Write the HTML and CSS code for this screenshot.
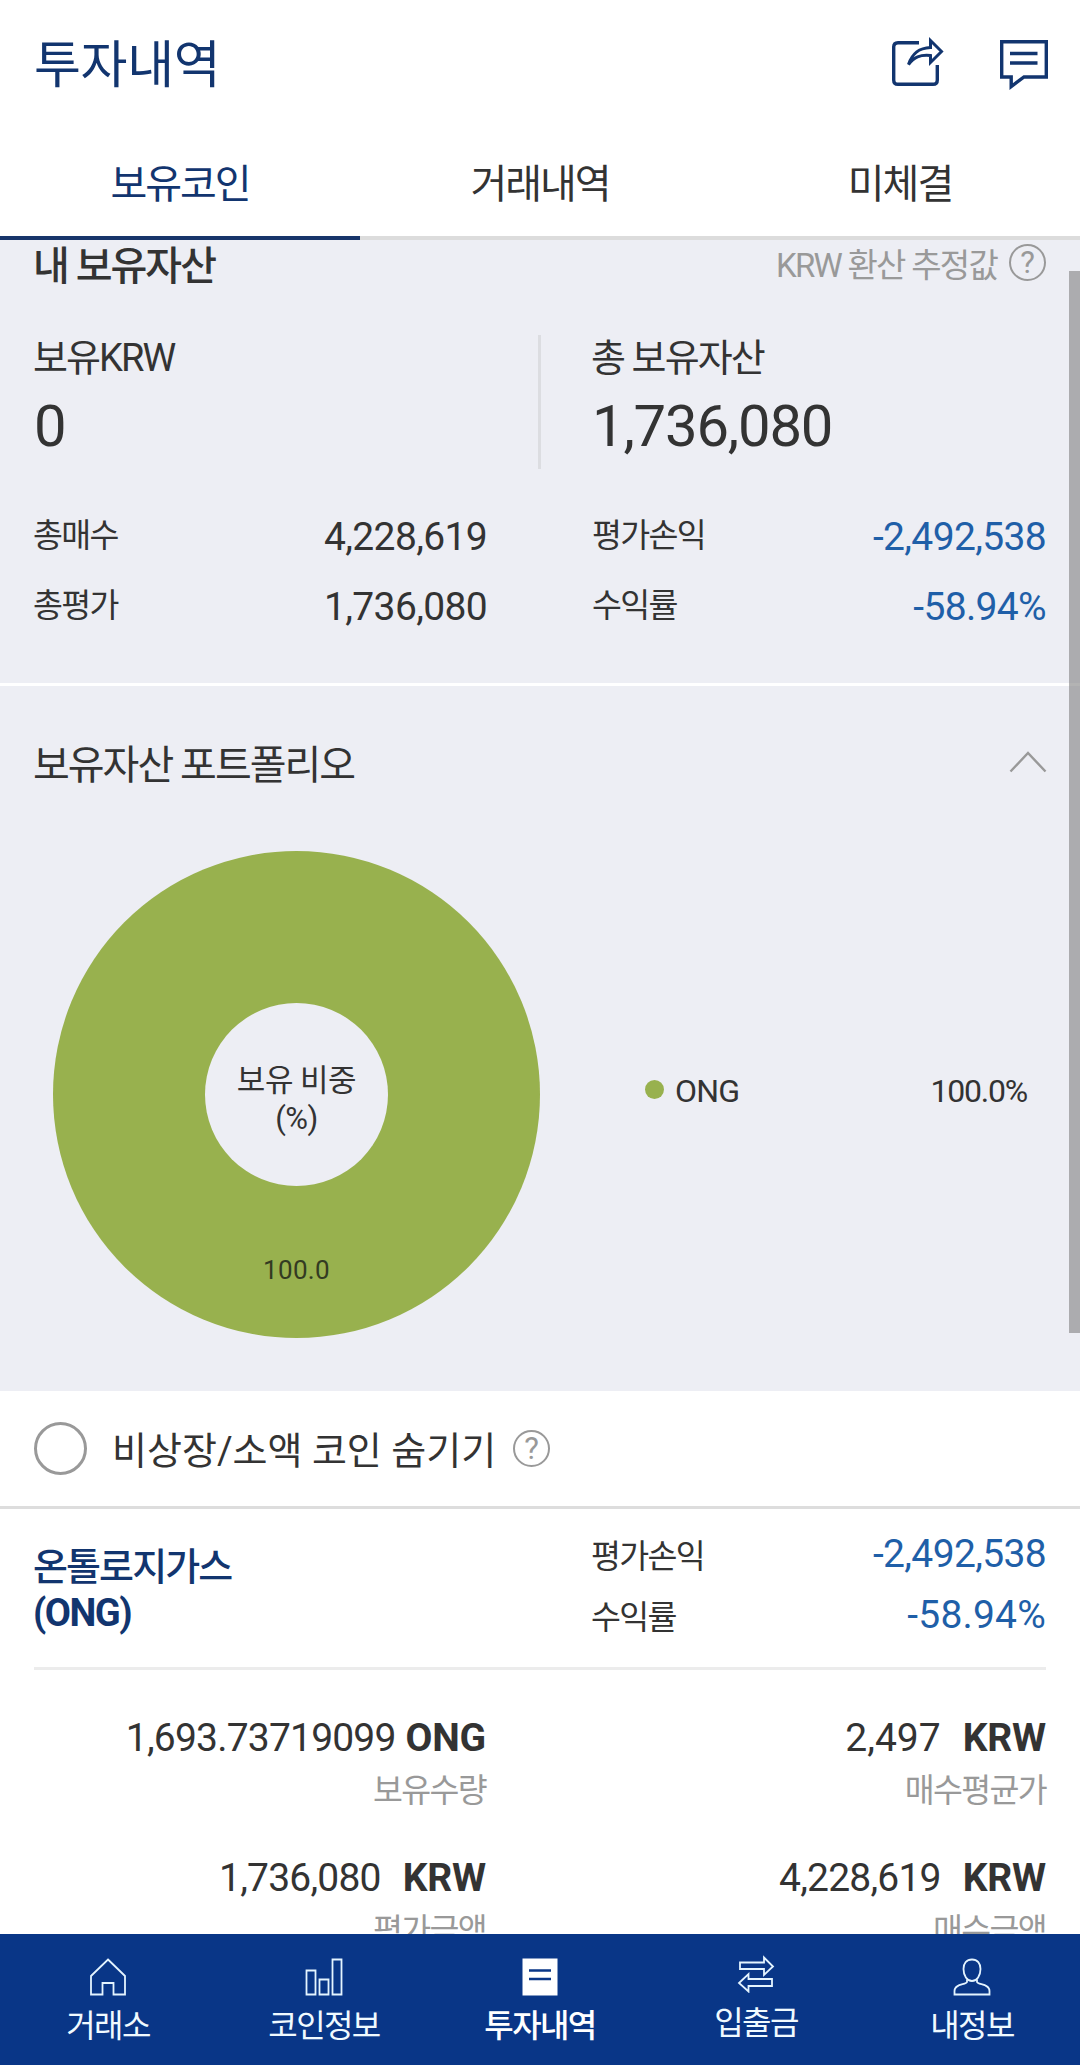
FILE: index.html
```html
<!DOCTYPE html>
<html lang="ko">
<head>
  <meta charset="UTF-8">
  <meta name="viewport" content="width=device-width, initial-scale=1.0">
  <title>투자내역</title>
  <link rel="stylesheet" href="styles.css">
</head>
<body>
  <div class="app">
    <header class="header">
      <h1>투자내역</h1>
      <div class="header-icons">
        <svg width="54" height="56" viewBox="0 0 54 56" fill="none" stroke="#12356f" stroke-width="3.4">
          <path d="M29 7.700H8Q3.700 7.700 3.700 12V45Q3.700 49.300 8 49.300H43Q47.300 49.300 47.300 45V30"/>
          <path stroke-width="3" d="M18.500 29.500C22 19 28 13 40.500 12.500V5.500L51.500 16.500L40.500 27.500V20.500C30 19.500 24 22 18.500 29.500Z"/>
        </svg>
        <svg width="50" height="56" viewBox="0 0 50 56" fill="none" stroke="#12356f" stroke-width="3.4">
          <path d="M2.700 6.700H47.300V42H25L12.200 51.500V42H2.700Z"/>
          <path d="M11 18.500H38.500M11 28H38.500"/>
        </svg>
      </div>
    </header>

    <nav class="tabs">
      <a class="tab active" href="#">보유코인</a>
      <a class="tab" href="#">거래내역</a>
      <a class="tab" href="#">미체결</a>
    </nav>

    <main class="content">
      <section class="assets">
        <div class="assets-head">
          <h2>내 보유자산</h2>
          <div class="note">KRW 환산 추정값 <span class="help">?</span></div>
        </div>
        <div class="totals">
          <div class="total">
            <div class="total-label">보유KRW</div>
            <div class="total-value">0</div>
          </div>
          <div class="total total-right">
            <div class="total-label">총 보유자산</div>
            <div class="total-value">1,736,080</div>
          </div>
        </div>
        <dl class="stats">
          <div><dt>총매수</dt><dd>4,228,619</dd></div>
          <div><dt>평가손익</dt><dd class="down">-2,492,538</dd></div>
          <div><dt>총평가</dt><dd>1,736,080</dd></div>
          <div><dt>수익률</dt><dd class="down">-58.94%</dd></div>
        </dl>
      </section>

      <section class="portfolio">
        <div class="portfolio-head">
          <h2>보유자산 포트폴리오</h2>
          <svg width="38" height="22" viewBox="0 0 38 22" fill="none" stroke="#999" stroke-width="2.400">
            <path d="M1.500 20.500L19 2L36.500 20.500"/>
          </svg>
        </div>
        <div class="portfolio-body">
          <div class="donut">
            <div class="donut-hole">보유 비중<br>(%)</div>
            <span class="donut-value">100.0</span>
          </div>
          <div class="legend">
            <span class="dot"></span>
            <span>ONG</span>
            <span class="legend-value">100.0%</span>
          </div>
        </div>
      </section>

      <div class="filter">
        <span class="radio"></span>
        <span class="filter-text">비상장/소액 코인 숨기기</span>
        <span class="help">?</span>
      </div>

      <section class="coin">
        <div class="coin-head">
          <h3>온톨로지가스<br><b>(ONG)</b></h3>
          <dl class="coin-stats">
            <div><dt>평가손익</dt><dd class="down">-2,492,538</dd></div>
            <div><dt>수익률</dt><dd class="down rate">-58.94%</dd></div>
          </dl>
        </div>
        <div class="coin-grid">
          <div class="cell">
            <div class="amount">1,693.73719099<b>ONG</b></div>
            <div class="caption">보유수량</div>
          </div>
          <div class="cell">
            <div class="amount krw price">2,497<b>KRW</b></div>
            <div class="caption">매수평균가</div>
          </div>
          <div class="cell">
            <div class="amount krw">1,736,080<b>KRW</b></div>
            <div class="caption">평가금액</div>
          </div>
          <div class="cell">
            <div class="amount krw">4,228,619<b>KRW</b></div>
            <div class="caption">매수금액</div>
          </div>
        </div>
      </section>
      <div class="scrollbar"></div>
    </main>

    <nav class="bottom-nav">
      <a href="#">
        <svg width="38" height="38" viewBox="0 0 38 38" fill="none" stroke="#e4f4ff" stroke-width="1.800">
          <path d="M19 1.500L36 18V36.500H24.500V25H13.500V36.500H2V18Z"/>
        </svg>
        거래소
      </a>
      <a href="#">
        <svg width="38" height="38" viewBox="0 0 38 38" fill="none" stroke="#e4f4ff" stroke-width="1.800">
          <path d="M1.500 12.500H10.500V36.500H1.500ZM14.500 21.500H23.500V36.500H14.500ZM27.500 1.500H36.500V36.500H27.500Z"/>
        </svg>
        코인정보
      </a>
      <a class="active" href="#">
        <svg width="38" height="38" viewBox="0 0 38 38">
          <path fill="#fff" d="M1.500 .500H36.500V37.500H1.500Z"/>
          <path stroke="#093687" stroke-width="2.500" d="M8 12.500H30M8 21H30"/>
        </svg>
        투자내역
      </a>
      <a class="transfer" href="#">
        <svg width="38" height="38" viewBox="0 0 38 38" fill="none" stroke="#e4f4ff" stroke-width="1.800">
          <path d="M3 7.500H27V2.500L36 11.500L27 20V14H3Z"/>
          <path d="M35 24H11.500V19L2 28L11.500 36.500V31H35Z"/>
        </svg>
        입출금
      </a>
      <a href="#">
        <svg width="38" height="38" viewBox="0 0 38 38" fill="none" stroke="#e4f4ff" stroke-width="1.800">
          <path d="M14 21.500V24C13 27 1.500 25.500 1.500 33V36.500H36.500V33C36.500 25.500 25 27 24 24V21.500"/>
          <path d="M19 1.500C13.500 1.500 10.500 5.500 10.500 11C10.500 17.500 14 23 19 23S27.500 17.500 27.500 11C27.500 5.500 24.500 1.500 19 1.500Z"/>
        </svg>
        내정보
      </a>
    </nav>
  </div>
</body>
</html>
```
FILE: styles.css
```css
* {
  box-sizing: border-box;
}
body {
  margin: 0;
  font-family: Roboto, 'Noto Sans CJK KR', sans-serif;
  color: #333;
  background-color: #fff;
}
h1, h2, h3, dl, dd {
  margin: 0;
  font-weight: normal;
}
a {
  text-decoration: none;
}
svg {
  display: block;
}
.app {
  display: flex;
  flex-direction: column;
  height: 2065px;
  overflow: hidden;
}
.header {
  display: flex;
  justify-content: space-between;
  align-items: center;
  height: 128px;
  padding: 0 31px 0 34px;
}
.header h1 {
  padding-top: 4px;
  font-size: 51px;
  line-height: 60px;
  letter-spacing: -0.300px;
  color: #12356f;
}
.header-icons {
  display: flex;
  gap: 55px;
  margin-bottom: 2px;
}
.tabs {
  display: grid;
  grid-template-columns: repeat(3, 1fr);
  height: 112px;
}
.tab {
  padding-top: 6px;
  border-bottom: 4px solid #dcdcdc;
  text-align: center;
  font-size: 40px;
  line-height: 102px;
  letter-spacing: -2px;
  color: #333;
}
.tab.active {
  color: #12356f;
  border-color: #17356a;
}
.content {
  position: relative;
  flex: 1;
  min-height: 0;
  overflow: hidden;
}
.assets {
  height: 446px;
  background: #edeef4;
  border-bottom: 3px solid #fff;
}
.assets-head {
  display: flex;
  justify-content: space-between;
  align-items: center;
  height: 45px;
  padding: 0 34px 0 33px;
}
.assets-head h2 {
  font-size: 40px;
  font-weight: 500;
  letter-spacing: -2px;
}
.note {
  display: flex;
  align-items: center;
  font-size: 33px;
  letter-spacing: -1.750px;
  color: #999;
}
.help {
  display: inline-block;
  width: 37px;
  height: 37px;
  margin-left: 12px;
  border: 2px solid #999;
  border-radius: 50%;
  font-size: 31px;
  line-height: 34px;
  letter-spacing: 0;
  text-align: center;
  color: #999;
}
.totals {
  display: grid;
  grid-template-columns: 541px 1fr;
  margin-top: 50px;
}
.total {
  height: 134px;
  padding-left: 33px;
  border-right: 3px solid #dcdde1;
}
.total-right {
  padding-left: 50px;
  border: none;
}
.total-label {
  font-size: 38px;
  line-height: 47px;
  letter-spacing: -1.900px;
}
.total-value {
  padding-left: 1px;
  font-size: 58px;
  line-height: 88px;
  letter-spacing: -1.200px;
}
.stats {
  display: grid;
  grid-template-columns: 454px 454px;
  column-gap: 105px;
  padding: 33px 33px;
}
.stats div {
  display: flex;
  justify-content: space-between;
  line-height: 69px;
}
dt {
  font-size: 32.500px;
  letter-spacing: -1.650px;
}
dd {
  font-size: 39px;
  letter-spacing: -0.650px;
}
.stats dd {
  padding-top: 1px;
}
.down {
  color: #1f5fa8;
}
.portfolio {
  height: 705px;
  background: #edeef4;
}
.portfolio-head {
  display: flex;
  justify-content: space-between;
  align-items: center;
  height: 151px;
  padding: 0 33px;
}
.portfolio-head h2 {
  font-size: 40px;
  letter-spacing: -2px;
}
.portfolio-body {
  display: flex;
  align-items: center;
  padding: 14px 53px 0 53px;
}
.donut {
  position: relative;
  display: flex;
  align-items: center;
  justify-content: center;
  width: 487px;
  height: 487px;
  border-radius: 50%;
  background: #98b14e;
}
.donut-hole {
  width: 183px;
  height: 183px;
  padding-top: 59px;
  border-radius: 50%;
  background: #edeef4;
  text-align: center;
  font-size: 31px;
  line-height: 38px;
  letter-spacing: -0.500px;
}
.donut-value {
  position: absolute;
  bottom: 52px;
  font-size: 26px;
  line-height: 32px;
  letter-spacing: 0.300px;
  color: #333b22;
}
.legend {
  flex: 1;
  display: flex;
  align-items: center;
  margin: 0 0 8px 105px;
  font-size: 32px;
  letter-spacing: -0.800px;
}
.dot {
  width: 19px;
  height: 19px;
  margin: 0 11px 2px 0;
  border-radius: 50%;
  background: #98b14e;
}
.legend-value {
  margin-left: auto;
  letter-spacing: -1.200px;
}
.filter {
  display: flex;
  align-items: center;
  height: 118px;
  padding-left: 34px;
  border-bottom: 3px solid #ddd;
}
.radio {
  width: 53px;
  height: 53px;
  border: 3px solid #999;
  border-radius: 50%;
}
.filter-text {
  margin: 0 0 2px 25px;
  font-size: 38px;
}
.filter .help {
  margin-left: 17px;
}
.coin {
  padding: 0 34px;
}
.coin-head {
  display: grid;
  grid-template-columns: 557px 1fr;
  height: 161px;
  padding-top: 15px;
  border-bottom: 3px solid #ececec;
}
.coin-head h3 {
  margin-left: -1px;
  padding-top: 20px;
  font-size: 38px;
  font-weight: 500;
  line-height: 46px;
  letter-spacing: -1.900px;
  color: #12356f;
}
.coin-head b {
  letter-spacing: -1.500px;
}
.coin-stats div {
  display: flex;
  justify-content: space-between;
  line-height: 60px;
}
.coin-stats dt {
  padding-top: 3px;
}
.coin-stats div + div {
  height: 60px;
  margin-top: -2px;
}
.coin-stats .rate {
  letter-spacing: 0.200px;
}
.coin-grid {
  display: grid;
  grid-template-columns: 452px 1fr;
  padding-top: 38px;
}
.cell {
  height: 140px;
  text-align: right;
}
.amount {
  font-size: 39px;
  line-height: 60px;
  letter-spacing: -0.800px;
}
.amount b {
  margin-left: 10px;
  letter-spacing: -0.200px;
}
.amount.krw b {
  margin-left: 22px;
}
.amount.price {
  letter-spacing: 0;
}
.caption {
  font-size: 32.500px;
  line-height: 46px;
  letter-spacing: -1.650px;
  color: #999;
}
.scrollbar {
  position: absolute;
  top: 31px;
  right: 0;
  width: 11px;
  height: 1062px;
  background: rgba(128, 128, 128, 0.6);
}
.bottom-nav {
  display: grid;
  grid-template-columns: repeat(5, 1fr);
  height: 131px;
  background: #093687;
}
.bottom-nav a {
  display: flex;
  flex-direction: column;
  align-items: center;
  padding-top: 24px;
  font-size: 32px;
  line-height: 61px;
  letter-spacing: -1.600px;
  color: #f0faff;
}
.bottom-nav a.active {
  font-weight: 500;
  color: #fff;
}
.bottom-nav a.transfer {
  padding-top: 21px;
}
```
